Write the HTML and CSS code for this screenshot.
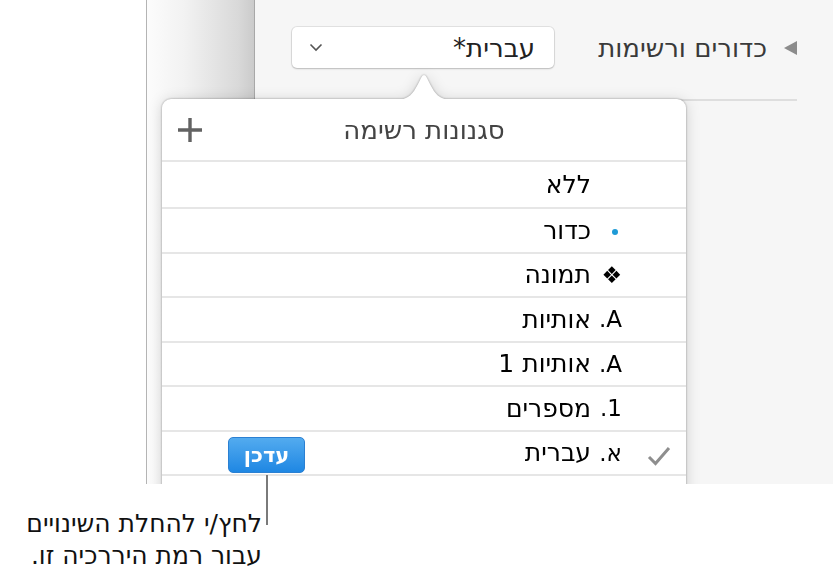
FILE: index.html
```html
<!DOCTYPE html>
<html lang="he">
<head>
<meta charset="utf-8"/>
<meta content="width=device-width, initial-scale=1.0" name="viewport"/>
<title>סגנונות רשימה</title>
<link rel="stylesheet" href="styles.css">
</head>
<body>
<div class="figure">
  <div class="shot">
    <div class="gutter"></div>
    <section class="inspector">
      <div class="section-row">
        <svg class="disclosure" width="13" height="14" viewBox="0 0 13 14"><polygon points="13,0 13,14 0,7" fill="#8c8c8c"/></svg>
        <span class="section-title">כדורים ורשימות</span>
        <div class="select">
          <span>עברית*</span>
          <svg width="14" height="9" viewBox="0 0 14 9"><polyline points="1.5,1.5 7,7 12.5,1.5" fill="none" stroke="#555" stroke-width="1.6"/></svg>
        </div>
      </div>
      <div class="rule"></div>
    </section>

    <div class="popover">
      <svg class="popover-arrow" width="60" height="28" viewBox="0 0 60 28"><path d="M0,28 C15,28 19,23 27,6 Q30,0 33,6 C41,23 45,28 60,28 Z" fill="#fff"/></svg>
      <div class="popover-head">
        <svg class="add" width="26" height="26" viewBox="0 0 26 26"><path d="M13 1v24M1 13h24" stroke="#626262" stroke-width="3.4"/></svg>
        <span class="popover-title">סגנונות רשימה</span>
        <span class="add-spacer"></span>
      </div>
      <div class="row"><span class="check"></span><span class="mark"></span><span class="label">ללא</span></div>
      <div class="row"><span class="check"></span><span class="mark"><i class="dot"></i></span><span class="label">כדור</span></div>
      <div class="row"><span class="check"></span><span class="mark">❖</span><span class="label">תמונה</span></div>
      <div class="row"><span class="check"></span><span class="mark">A.</span><span class="label">אותיות</span></div>
      <div class="row"><span class="check"></span><span class="mark">A.</span><span class="label">אותיות 1</span></div>
      <div class="row"><span class="check"></span><span class="mark">1.</span><span class="label">מספרים</span></div>
      <div class="row">
        <span class="check"><svg width="24" height="20" viewBox="0 0 24 20"><polyline points="2,11 8.5,17.5 22,2" fill="none" stroke="#8e8e8e" stroke-width="3"/></svg></span>
        <span class="mark">א.</span><span class="label">עברית</span>
        <button class="update">עדכן</button>
      </div>
      <div class="row"></div>
    </div>
  </div>

  <p class="caption">לחץ/י להחלת השינויים<br>עבור רמת היררכיה זו.</p>
</div>
</body>
</html>
```

FILE: styles.css
```css
body {
  margin: 0;
  background: #fff;
  font-family: "DejaVu Sans", "Liberation Sans", sans-serif;
  color: #111;
}
.figure {
  width: 833px;
  height: 575px;
  position: relative;
  overflow: hidden;
}
.shot {
  margin-left: 146px;
  width: 687px;
  height: 484px;
  display: flex;
  position: relative;
  overflow: hidden;
  border-left: 1px solid #b4b4b4;
  box-sizing: border-box;
}
.gutter {
  width: 107px;
  flex: none;
  background: linear-gradient(to right, #fcfcfc, #f2f2f2 35%, #d9d9d9 85%, #cbcbcb);
  border-right: 1px solid #a8a8a8;
}
.inspector {
  flex: 1;
  background: #f6f6f6;
  direction: rtl;
  padding: 27px 36px 0 37px;
}
.section-row {
  display: flex;
  align-items: center;
  height: 41px;
}
.section-title {
  margin-right: 17px;
  font-size: 26px;
  color: #3a3a3a;
}
.select {
  margin-right: auto;
  width: 262px;
  height: 41px;
  box-sizing: border-box;
  background: #fff;
  border-radius: 5px;
  box-shadow: 0 0 0 1px rgba(0,0,0,0.08), 0 1px 2px rgba(0,0,0,0.18);
  display: flex;
  align-items: center;
  justify-content: space-between;
  padding: 0 19px 0 17px;
  font-size: 26px;
  color: #222;
}
.rule {
  margin-top: 31px;
  height: 2px;
  background: #dedede;
}
.popover {
  position: absolute;
  left: 15px;
  top: 99px;
  width: 524px;
  height: 420px;
  background: #fff;
  border-radius: 9px;
  filter: drop-shadow(0 0 1px rgba(0,0,0,0.35)) drop-shadow(0 2px 7px rgba(0,0,0,0.16));
}
.popover-arrow {
  position: absolute;
  left: 232px;
  top: -27px;
}
.popover-head {
  height: 61px;
  display: flex;
  align-items: center;
  padding: 0 15px;
}
.add, .add-spacer {
  width: 26px;
  flex: none;
}
.popover-title {
  flex: 1;
  text-align: center;
  direction: rtl;
  font-size: 26px;
  color: #444;
}
.row {
  height: 44.5px;
  box-sizing: border-box;
  border-top: 2px solid #e6e6e6;
  display: flex;
  align-items: center;
  direction: rtl;
  padding: 0 15px 0 66px;
  font-size: 25px;
  color: #000;
}
.popover-head + .row {
  height: 47px;
}
.check {
  width: 24px;
  height: 20px;
  flex: none;
  margin-left: 25px;
}
.mark {
  width: 31px;
  flex: none;
  font-size: 23px;
}
.dot {
  display: inline-block;
  width: 6px;
  height: 6px;
  border-radius: 50%;
  background: #1e9ad6;
  margin-right: 4px;
  vertical-align: middle;
}
.update {
  margin-right: auto;
  margin-top: 5px;
  width: 77px;
  height: 36px;
  border: 1px solid #2b80d2;
  border-radius: 5px;
  background: linear-gradient(#53abef, #1f87e3);
  color: #fff;
  font-family: inherit;
  font-size: 21px;
  font-weight: bold;
  padding: 0;
}
.caption {
  position: relative;
  margin: 0;
  width: 262px;
  padding-top: 24px;
  direction: rtl;
  text-align: right;
  font-size: 25px;
  line-height: 32px;
  color: #111;
}
.caption::before {
  content: "";
  position: absolute;
  left: 266px;
  top: -9px;
  width: 2px;
  height: 50px;
  background: #7a7a7a;
}
```
